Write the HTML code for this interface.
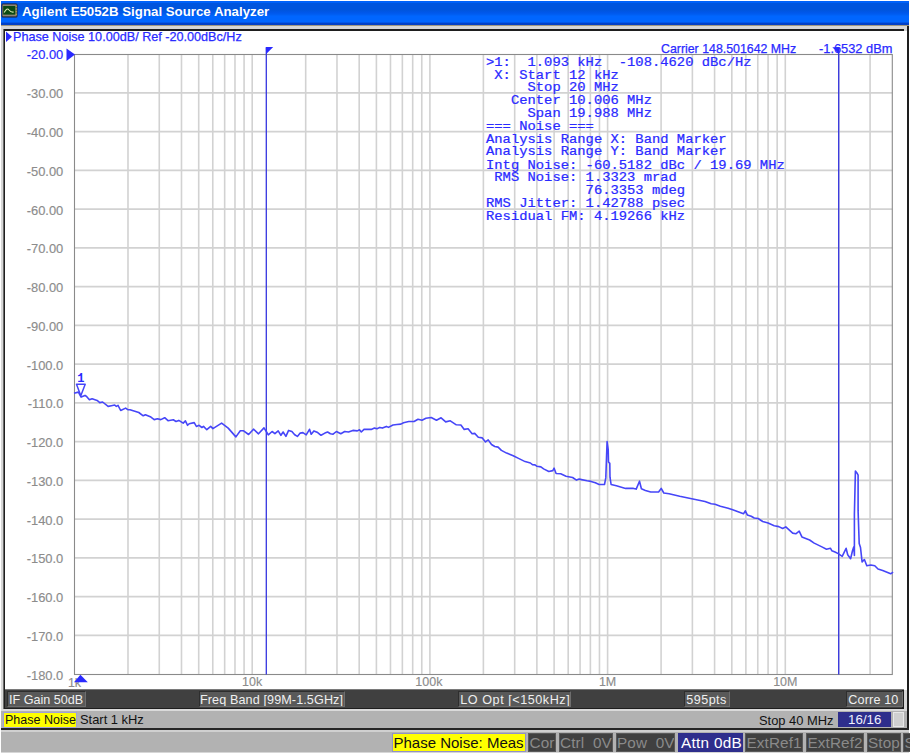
<!DOCTYPE html>
<html><head><meta charset="utf-8">
<style>
html,body{margin:0;padding:0;}
body{width:910px;height:754px;position:relative;overflow:hidden;background:#fff;font-family:"Liberation Sans",sans-serif;}
.a{position:absolute;white-space:pre;}
.yl{left:0;width:63.3px;text-align:right;font-size:12.9px;line-height:16px;-webkit-text-stroke:0.15px currentColor;}
.xl{text-align:center;font-size:12.5px;line-height:16px;color:#8c8c8c;-webkit-text-stroke:0.15px #8c8c8c;}
.mk{left:486px;top:56.3px;-webkit-text-stroke:0.25px #2a2aff;width:320px;height:170px;font-family:"Liberation Mono",monospace;font-size:13.83px;line-height:14px;color:#2a2aff;transform:scaleY(0.88);transform-origin:0 0;}
.bx{position:absolute;top:691px;padding-top:0.8px;height:16px;background:#595959;box-sizing:border-box;border-top:1px solid #2e2e2e;border-left:1px solid #2e2e2e;border-right:1px solid #6e6e6e;border-bottom:1px solid #6e6e6e;color:#f0f0f0;font-size:12.6px;line-height:14px;white-space:pre;padding-left:2px;overflow:hidden}
.b3{position:absolute;top:732.5px;height:19px;background:#404040;box-sizing:border-box;border:1px solid #5a5a5a;color:#8a8a8a;font-size:15.3px;line-height:17px;white-space:pre;padding-left:0.5px;letter-spacing:0.1px;overflow:hidden}
</style></head><body>
<div class="a" style="left:1px;top:25px;width:908px;height:728px;background:#d6d6d6"></div>
<div class="a" style="left:1px;top:1px;width:908px;height:23.5px;background:linear-gradient(#0062fa 0,#0062fa 2px,#0055dd 2.5px,#0055dd 9px,#0058ec 12px,#0060f4 14px,#0066ff 15px,#0066ff 21.3px,#0040c8 21.8px)"></div>
<div class="a" style="left:1px;top:24.5px;width:908px;height:1.5px;background:#a09880"></div>
<div class="a" style="left:3.5px;top:29px;width:900.3px;height:2px;background:#1e1e1e"></div>
<div class="a" style="left:3px;top:29px;width:1px;height:680.3px;background:#6a6a6a"></div>
<div class="a" style="left:4px;top:29px;width:1px;height:680.3px;background:#1e1e1e"></div>
<div class="a" style="left:5px;top:31px;width:901.8px;height:658.5px;background:#fff"></div>
<div class="a" style="left:5px;top:689px;width:899px;height:19px;background:#1e1e1e"></div>
<div class="a" style="left:5px;top:689px;width:899px;height:1px;background:#7a7a7a"></div>
<div class="a" style="left:5px;top:689.5px;width:897px;height:18px;background:#404040"></div>
<div class="a" style="left:3.5px;top:707.5px;width:900.5px;height:1.8px;background:#1e1e1e"></div>
<div class="a" style="left:1px;top:709.3px;width:905.8px;height:2px;background:#dadada"></div>
<div class="a" style="left:1px;top:711.3px;width:905.8px;height:16.5px;background:#b2b2b2"></div>
<div class="a" style="left:1px;top:727.8px;width:907.6px;height:2px;background:#262626"></div>
<div class="a" style="left:1px;top:729.8px;width:908px;height:2px;background:#d0d0d0"></div>
<div class="a" style="left:1px;top:731.8px;width:908px;height:20.7px;background:#b2b2b2"></div>
<div class="a" style="left:906.8px;top:26px;width:1.8px;height:702px;background:#1e1e1e"></div>
<svg class="a" style="left:0;top:0" width="20" height="20"><rect x="1.5" y="3.4" width="16" height="14" rx="1.5" fill="#1c1c30"/><rect x="2.4" y="4.4" width="14.2" height="12" fill="#8a8478"/><rect x="3.2" y="6" width="12.2" height="8.6" fill="#0b4a12"/><path d="M4.2 12.6Q7 7 9 10Q11 12.5 13.7 12" stroke="#d8e8b0" stroke-width="1.1" fill="none"/><path d="M16.2 5.5V16" stroke="#d8c830" stroke-width="0.9" stroke-dasharray="1.5 1.2"/></svg>
<div class="a" style="left:22px;top:3px;font-size:13.27px;line-height:18px;font-weight:bold;color:#fff">Agilent E5052B Signal Source Analyzer</div>
<svg width="910" height="754" style="position:absolute;left:0;top:0">
<path d="M127.99 54.5V674.5M159.28 54.5V674.5M181.49 54.5V674.5M198.71 54.5V674.5M212.78 54.5V674.5M224.67 54.5V674.5M234.98 54.5V674.5M244.07 54.5V674.5M252.20 54.5V674.5M305.69 54.5V674.5M336.98 54.5V674.5M359.19 54.5V674.5M376.41 54.5V674.5M390.48 54.5V674.5M402.37 54.5V674.5M412.68 54.5V674.5M421.77 54.5V674.5M429.90 54.5V674.5M483.39 54.5V674.5M514.68 54.5V674.5M536.89 54.5V674.5M554.11 54.5V674.5M568.18 54.5V674.5M580.07 54.5V674.5M590.38 54.5V674.5M599.47 54.5V674.5M607.60 54.5V674.5M661.09 54.5V674.5M692.38 54.5V674.5M714.59 54.5V674.5M731.81 54.5V674.5M745.88 54.5V674.5M757.77 54.5V674.5M768.08 54.5V674.5M777.17 54.5V674.5M785.30 54.5V674.5M838.79 54.5V674.5M870.08 54.5V674.5M74.5 92.85H892.3M74.5 131.60H892.3M74.5 170.35H892.3M74.5 209.10H892.3M74.5 247.85H892.3M74.5 286.60H892.3M74.5 325.35H892.3M74.5 364.10H892.3M74.5 402.85H892.3M74.5 441.60H892.3M74.5 480.35H892.3M74.5 519.10H892.3M74.5 557.85H892.3M74.5 596.60H892.3M74.5 635.35H892.3" stroke="#d2d2d2" stroke-width="1.6" fill="none"/>
<rect x="74.5" y="54.5" width="817.79" height="620.00" stroke="#8a8a8a" stroke-width="1.1" fill="none"/>
</svg>
<div class="a" style="left:13px;top:29px;font-size:12.64px;line-height:16px;color:#2a2aff;-webkit-text-stroke:0.25px #2a2aff">Phase Noise 10.00dB/ Ref -20.00dBc/Hz</div>
<div class="a" style="left:661px;top:42px;font-size:12.35px;line-height:14px;color:#2a2aff;-webkit-text-stroke:0.25px #2a2aff">Carrier 148.501642 MHz</div>
<div class="a" style="left:819px;top:42px;font-size:12.84px;line-height:14px;color:#2a2aff;-webkit-text-stroke:0.25px #2a2aff">-1.6532 dBm</div>
<div class="a yl" style="top:46.5px;color:#2a2aff">-20.00</div>
<div class="a yl" style="top:86.2px;color:#8c8c8c">-30.00</div>
<div class="a yl" style="top:125.0px;color:#8c8c8c">-40.00</div>
<div class="a yl" style="top:163.8px;color:#8c8c8c">-50.00</div>
<div class="a yl" style="top:202.5px;color:#8c8c8c">-60.00</div>
<div class="a yl" style="top:241.2px;color:#8c8c8c">-70.00</div>
<div class="a yl" style="top:280.0px;color:#8c8c8c">-80.00</div>
<div class="a yl" style="top:318.8px;color:#8c8c8c">-90.00</div>
<div class="a yl" style="top:357.5px;color:#8c8c8c">-100.0</div>
<div class="a yl" style="top:396.2px;color:#8c8c8c">-110.0</div>
<div class="a yl" style="top:435.0px;color:#8c8c8c">-120.0</div>
<div class="a yl" style="top:473.8px;color:#8c8c8c">-130.0</div>
<div class="a yl" style="top:512.5px;color:#8c8c8c">-140.0</div>
<div class="a yl" style="top:551.2px;color:#8c8c8c">-150.0</div>
<div class="a yl" style="top:590.0px;color:#8c8c8c">-160.0</div>
<div class="a yl" style="top:628.8px;color:#8c8c8c">-170.0</div>
<div class="a yl" style="top:667.5px;color:#8c8c8c">-180.0</div>

<div class="a xl" style="left:66.5px;width:16px;top:674.8px">1k</div>
<div class="a xl" style="left:222.2px;width:60px;top:674.1px">10k</div>
<div class="a xl" style="left:398.9px;width:60px;top:674.1px">100k</div>
<div class="a xl" style="left:577.6px;width:60px;top:674.1px">1M</div>
<div class="a xl" style="left:755.3px;width:60px;top:674.1px">10M</div>

<div class="a" style="left:77.3px;top:372px;font-size:12px;line-height:14px;color:#2a2aff;font-weight:bold;font-family:'Liberation Mono',monospace">1</div>
<div class="a mk"><div style="position:absolute;left:0;top:0.00px">>1:  1.093 kHz  -108.4620 dBc/Hz</div><div style="position:absolute;left:0;top:14.60px"> X: Start 12 kHz</div><div style="position:absolute;left:0;top:29.20px">     Stop 20 MHz</div><div style="position:absolute;left:0;top:43.81px">   Center 10.006 MHz</div><div style="position:absolute;left:0;top:58.41px">     Span 19.988 MHz</div><div style="position:absolute;left:0;top:73.01px">=== Noise ===</div><div style="position:absolute;left:0;top:87.61px">Analysis Range X: Band Marker</div><div style="position:absolute;left:0;top:102.22px">Analysis Range Y: Band Marker</div><div style="position:absolute;left:0;top:116.82px">Intg Noise: -60.5182 dBc / 19.69 MHz</div><div style="position:absolute;left:0;top:131.42px"> RMS Noise: 1.3323 mrad</div><div style="position:absolute;left:0;top:146.02px">            76.3353 mdeg</div><div style="position:absolute;left:0;top:160.62px">RMS Jitter: 1.42788 psec</div><div style="position:absolute;left:0;top:175.23px">Residual FM: 4.19266 kHz</div></div>
<svg width="910" height="754" style="position:absolute;left:0;top:0">
<line x1="266.3" y1="47.5" x2="266.3" y2="674.5" stroke="#3535e0" stroke-width="1.3"/>
<line x1="838.7" y1="47.5" x2="838.7" y2="674.5" stroke="#3535e0" stroke-width="1.3"/>
<path d="M265.8 47L273.2 47L266.2 54Z" fill="#2a2aff"/>
<path d="M832.3 47.3L839.5 47.3L839 53.8Z" fill="#2a2aff"/>
<path d="M74.0 393.2 L78.4 392.1 L81.1 397.1 L85.0 395.4 L86.6 396.5 L89.4 399.8 L92.1 398.7 L97.1 400.4 L99.8 402.6 L102.6 402.0 L108.1 406.4 L111.4 405.7 L114.7 405.0 L116.3 406.4 L118.0 405.3 L120.7 410.5 L125.6 408.1 L127.8 409.7 L130.0 409.7 L138.8 412.5 L143.2 415.8 L145.4 414.7 L150.9 417.1 L154.2 419.6 L157.5 418.8 L160.8 419.6 L164.7 417.7 L168.0 420.7 L170.7 420.2 L173.3 419.8 L176.0 421.5 L178.8 420.4 L183.2 423.1 L185.4 420.9 L187.6 425.3 L189.2 423.7 L194.2 422.6 L196.4 426.4 L199.1 425.3 L201.9 427.5 L203.5 426.4 L206.8 429.7 L210.7 426.4 L212.9 428.6 L221.6 423.1 L228.2 428.1 L235.9 436.9 L240.3 430.8 L243.6 430.8 L248.6 434.5 L253.5 429.2 L258.5 433.8 L264.0 427.9 L266.6 432.0 L268.3 434.8 L272.1 431.5 L274.9 433.7 L278.2 430.9 L280.9 435.3 L283.1 432.0 L285.9 436.4 L288.6 430.4 L291.9 431.5 L294.7 434.8 L297.4 436.4 L300.2 433.1 L302.9 432.6 L306.2 434.8 L309.5 429.3 L311.2 434.2 L313.9 430.9 L317.7 432.6 L321.0 435.3 L324.9 433.1 L327.6 432.0 L330.4 433.7 L333.1 434.2 L336.4 431.5 L340.8 433.7 L344.7 431.5 L348.5 432.0 L352.9 430.4 L357.3 430.9 L359.5 429.8 L361.3 432.0 L364.0 429.4 L371.2 429.4 L374.5 428.1 L377.1 428.7 L379.8 427.4 L382.4 428.1 L386.4 426.4 L388.4 427.4 L393.0 425.0 L396.9 424.5 L400.9 424.1 L403.5 422.8 L408.8 421.5 L414.1 421.5 L418.0 419.2 L422.0 420.2 L425.9 418.2 L431.2 417.5 L436.5 420.2 L441.1 417.8 L445.7 421.9 L450.3 420.8 L456.3 424.8 L460.9 425.0 L464.2 429.4 L468.1 428.7 L472.1 433.7 L474.7 433.4 L478.3 437.3 L482.3 437.9 L485.5 441.9 L488.2 439.9 L491.5 444.5 L494.8 446.5 L498.1 447.1 L501.4 450.4 L506.6 453.1 L513.2 455.7 L518.5 458.4 L525.1 461.6 L530.4 463.0 L532.4 464.6 L535.0 464.9 L537.0 466.3 L540.9 466.9 L543.6 468.9 L548.8 471.5 L552.8 470.6 L554.1 468.2 L556.1 473.5 L560.7 473.8 L566.0 476.2 L572.6 477.5 L576.5 480.1 L579.2 479.1 L587.1 480.8 L591.0 481.4 L595.3 482.7 L599.2 484.5 L604.5 484.5 L605.8 477.9 L606.5 458.1 L607.1 441.6 L608.2 449.5 L608.5 462.0 L609.8 463.4 L610.0 477.2 L611.1 484.5 L616.4 485.8 L625.6 488.4 L633.5 488.4 L636.2 489.1 L639.5 481.2 L641.4 488.8 L645.4 490.4 L650.7 492.0 L658.6 492.0 L661.2 488.4 L663.8 493.0 L669.1 493.7 L679.7 496.3 L692.9 499.0 L705.0 501.5 L711.2 503.8 L715.0 504.2 L720.4 506.2 L728.1 508.2 L732.7 509.7 L743.5 513.8 L745.3 510.8 L747.3 514.9 L751.2 516.2 L754.2 518.0 L758.1 518.5 L762.7 521.5 L768.1 523.1 L774.2 525.7 L778.8 526.6 L782.7 528.5 L785.8 526.9 L792.7 533.1 L795.8 533.8 L799.2 531.2 L801.9 536.9 L809.6 540.0 L814.2 543.1 L821.9 546.9 L826.5 549.2 L830.4 548.2 L831.9 550.8 L835.0 552.0 L838.2 553.6 L842.2 556.3 L846.1 548.3 L847.7 554.7 L850.6 558.7 L852.5 550.7 L853.8 546.7 L854.4 555.5 L854.4 514.1 L855.4 471.1 L857.3 473.5 L858.1 475.1 L858.1 510.9 L859.2 543.6 L860.5 547.5 L862.1 561.9 L864.4 559.5 L866.8 565.8 L870.8 565.0 L874.8 565.8 L878.0 569.0 L882.7 570.6 L890.7 573.8 L893.1 572.2" stroke="#4646f8" stroke-width="1.6" fill="none" stroke-linejoin="round"/>
<path d="M76.5 384.3H85.2L80.8 395.8Z" stroke="#4646f8" stroke-width="1.5" fill="none" stroke-linejoin="round"/>
<path d="M6 31.5L12 36.75L6 42Z" fill="#2a2aff"/>
<path d="M66.5 48.5L75 54.6L66.5 61Z" fill="#2a2aff"/>
<path d="M74 682.2L80.4 674.8L87.8 682.2Z" fill="#2a2aff"/>
</svg>
<div class="bx" style="left:7px;width:78.5px;padding-left:1px">IF Gain 50dB</div>
<div class="bx" style="left:199px;width:145.5px;letter-spacing:0.11px;padding-left:0">Freq Band [99M-1.5GHz]</div>
<div class="bx" style="left:458px;width:113px;letter-spacing:0.55px;padding-left:1.3px">LO Opt [&lt;150kHz]</div>
<div class="bx" style="left:684.3px;width:45.5px;letter-spacing:0.45px;padding-left:1px">595pts</div>
<div class="bx" style="left:845.8px;width:56.9px;letter-spacing:0.15px;padding-left:1.5px">Corre 10</div>
<div class="a" style="left:3px;top:711.5px;width:74px;height:16px;background:#ffff00;box-sizing:border-box;border:1px solid #a0a0d8;font-size:12.5px;line-height:14px;color:#111;padding-left:1px;padding-top:0.8px">Phase Noise</div>
<div class="a" style="left:80px;top:712.3px;font-size:12.9px;line-height:16px;color:#111">Start 1 kHz</div>
<div class="a" style="left:700px;width:133.5px;text-align:right;top:712.5px;font-size:12.9px;line-height:16px;color:#111">Stop 40 MHz</div>
<div class="a" style="left:838px;top:712px;width:52.5px;height:14.5px;background:#2e2e8c;color:#f0f0ff;font-size:13.3px;line-height:16.5px;text-align:center;padding-left:1px;box-sizing:border-box">16/16</div>
<div class="a" style="left:893.2px;top:712px;width:11.2px;height:14.7px;background:#d0d0d0;box-sizing:border-box;border:1px solid #e8e8e8"></div>
<div class="a" style="left:391.5px;top:732.5px;width:134.5px;height:19px;background:#ffff00;box-sizing:border-box;border:1px solid #9090c8;font-size:15px;line-height:17px;color:#111;padding-left:1px">Phase Noise: Meas</div>
<div class="b3" style="left:528px;width:28px">Cor</div>
<div class="b3" style="left:558.5px;width:54px">Ctrl  0V</div>
<div class="b3" style="left:615.5px;width:59.5px">Pow  0V</div>
<div class="b3" style="left:678px;width:64.5px;background:#2e2e8c;color:#fff;border-color:#2e2e8c;letter-spacing:0.3px;padding-left:2px">Attn 0dB</div>
<div class="b3" style="left:745px;width:58px">ExtRef1</div>
<div class="b3" style="left:806px;width:58px">ExtRef2</div>
<div class="b3" style="left:866.5px;width:34px">Stop</div>
<div class="b3" style="left:903px;width:10px">S</div>
</body></html>
